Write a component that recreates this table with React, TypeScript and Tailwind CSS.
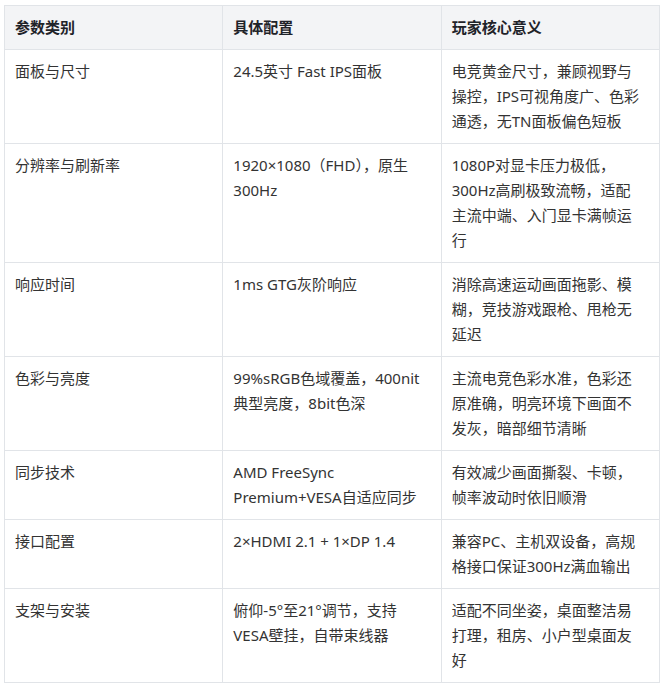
import React from "react";

const rows: [string[], string[], string[]][] = [
  [["面板与尺寸"], ["24.5英寸 Fast IPS面板"], ["电竞黄金尺寸，兼顾视野与", "操控，IPS可视角度广、色彩", "通透，无TN面板偏色短板"]],
  [["分辨率与刷新率"], ["1920×1080（FHD），原生", "300Hz"], ["1080P对显卡压力极低，", "300Hz高刷极致流畅，适配", "主流中端、入门显卡满帧运", "行"]],
  [["响应时间"], ["1ms GTG灰阶响应"], ["消除高速运动画面拖影、模", "糊，竞技游戏跟枪、甩枪无", "延迟"]],
  [["色彩与亮度"], ["99%sRGB色域覆盖，400nit", "典型亮度，8bit色深"], ["主流电竞色彩水准，色彩还", "原准确，明亮环境下画面不", "发灰，暗部细节清晰"]],
  [["同步技术"], ["AMD FreeSync", "Premium+VESA自适应同步"], ["有效减少画面撕裂、卡顿，", "帧率波动时依旧顺滑"]],
  [["接口配置"], ["2×HDMI 2.1 + 1×DP 1.4"], ["兼容PC、主机双设备，高规", "格接口保证300Hz满血输出"]],
  [["支架与安装"], ["俯仰-5°至21°调节，支持", "VESA壁挂，自带束线器"], ["适配不同坐姿，桌面整洁易", "打理，租房、小户型桌面友", "好"]],
];

function Cell({ lines }: { lines: string[] }) {
  return (
    <td className="border border-[#e1e4e8] px-[10px] py-[9px] align-top">
      {lines.map((l, i) => (
        <div key={i} className="whitespace-nowrap">{l}</div>
      ))}
    </td>
  );
}

export default function App() {
  return (
    <div className="w-[666px] h-[687px] bg-white pt-[5px] pl-[4px] font-['Noto_Sans','Noto_Sans_CJK_SC',sans-serif] text-[15px] leading-[25px] text-[#333333]">
      <table className="table-fixed border-collapse w-[656px]">
        <thead>
          <tr className="bg-[#f3f4f6]">
            <th className="border border-[#e1e4e8] px-[10px] py-[9px] text-left font-bold text-[#1f2329]">参数类别</th>
            <th className="border border-[#e1e4e8] px-[10px] py-[9px] text-left font-bold text-[#1f2329]">具体配置</th>
            <th className="border border-[#e1e4e8] px-[10px] py-[9px] text-left font-bold text-[#1f2329]">玩家核心意义</th>
          </tr>
        </thead>
        <tbody>
          {rows.map((r, i) => (
            <tr key={i}>
              <Cell lines={r[0]} />
              <Cell lines={r[1]} />
              <Cell lines={r[2]} />
            </tr>
          ))}
        </tbody>
      </table>
    </div>
  );
}
